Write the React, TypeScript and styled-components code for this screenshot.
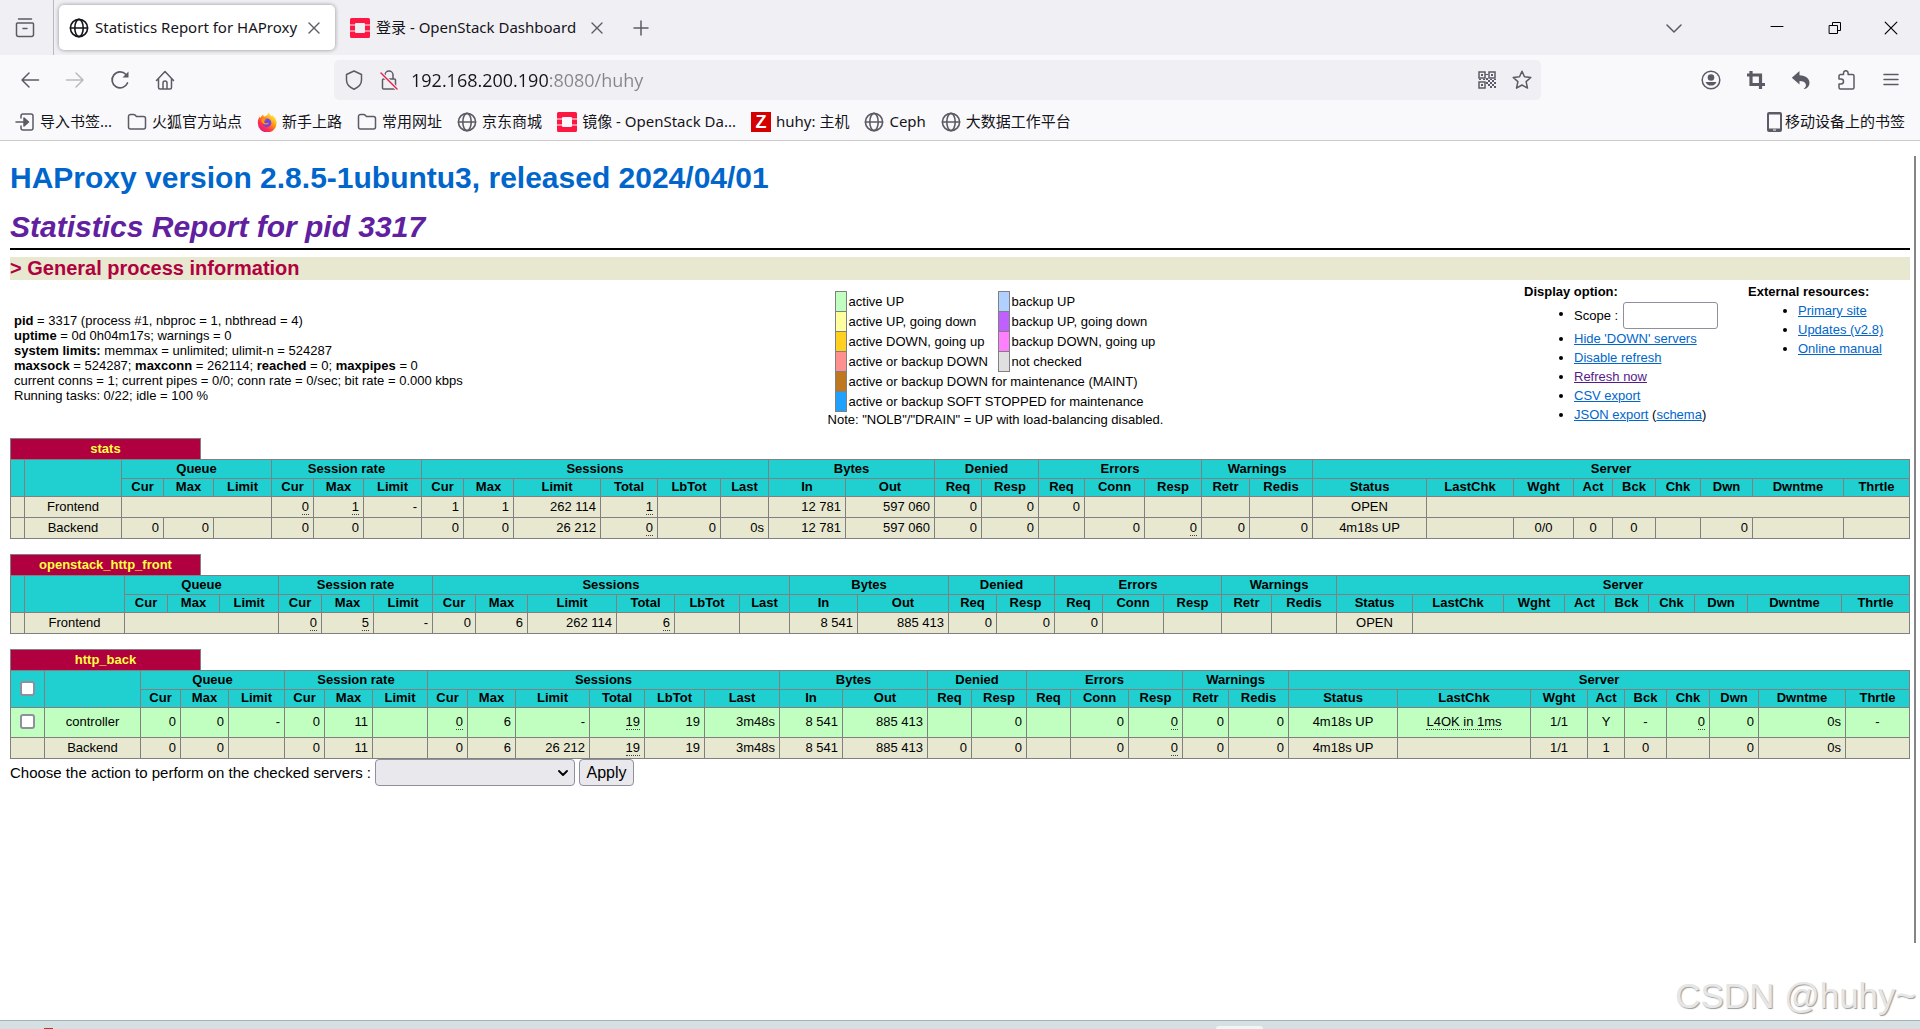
import React from "react";
import styled, { createGlobalStyle } from "styled-components";

const UI_FONT = `"Noto Sans", "Noto Sans CJK SC", sans-serif`;
const PAGE_FONT = `"Liberation Sans", Arial, Helvetica, sans-serif`;
const INK = "#15141a";
const ICON = "#5b5b66";
const LINE = "#808080";

const GlobalStyle = createGlobalStyle`
  *, *::before, *::after { box-sizing: border-box; }
  body { margin: 0; background: #fff; }
  button, input, select { font: inherit; }
`;

const Window = styled.div`
  min-height: 100vh;
  display: flex;
  flex-direction: column;
  font-family: ${UI_FONT};
  color: ${INK};
`;

/* ---------- browser frame ---------- */

const TabStrip = styled.header`
  display: flex;
  align-items: center;
  height: 55px;
  background: #f0f0f4;
`;

const IconButton = styled.button<{ $w?: number }>`
  display: flex;
  align-items: center;
  justify-content: center;
  flex: none;
  width: ${(p) => p.$w ?? 45}px;
  height: 40px;
  padding: 0;
  border: 0;
  background: transparent;
  color: ${ICON};
`;

const RecentPane = styled.div`
  display: flex;
  align-items: center;
  justify-content: center;
  width: 54px;
  height: 55px;
  padding-right: 4px;
  border-right: 1px solid #b9b9c0;
`;

const Tab = styled.div<{ $active?: boolean }>`
  display: flex;
  align-items: center;
  gap: 6px;
  height: 45px;
  margin-left: 5px;
  padding: 0 15px 0 10px;
  border-radius: 5px;
  font-size: 15px;
  line-height: 20px;
  white-space: nowrap;
  background: ${(p) => (p.$active ? "#fff" : "transparent")};
  box-shadow: ${(p) => (p.$active ? "0 0 4px rgba(0, 0, 0, 0.4)" : "none")};
`;

const TabTitle = styled.span<{ $w: number }>`
  width: ${(p) => p.$w}px;
  padding-bottom: 2px;
`;

const Spacer = styled.div`
  flex: 1;
`;

const WindowButtons = styled.div`
  display: flex;
  padding-right: 1px;
`;

const WindowButton = styled(IconButton)`
  color: #000;
`;

const NavBar = styled.nav`
  display: flex;
  align-items: center;
  height: 50px;
  padding: 0 7px;
  background: #f9f9fb;
`;

const NavGroup = styled.div<{ $w?: number }>`
  display: flex;
  width: ${(p) => (p.$w ? p.$w + "px" : "auto")};
`;

const AddressBar = styled.div`
  display: flex;
  align-items: center;
  flex: 1;
  height: 40px;
  margin-right: 147px;
  padding: 0 2px;
  border-radius: 5px;
  background: #f0f0f4;
`;

const AddressInput = styled.input`
  flex: 1;
  height: 30px;
  padding: 0;
  margin-left: 5px;
  border: 0;
  outline: 0;
  font-family: "Open Sans", "Noto Sans CJK SC", sans-serif;
  font-size: 18px;
  color: transparent;
  background: linear-gradient(90deg, ${INK} 138px, #85858c 138px);
  background-clip: text;
`;

const BookmarkBar = styled.div`
  display: flex;
  align-items: center;
  gap: 15px;
  height: 36px;
  padding: 0 15px 1px;
  background: #f9f9fb;
  border-bottom: 1px solid #cccccc;
`;

const Bookmark = styled.a<{ $tight?: boolean }>`
  display: flex;
  align-items: center;
  gap: ${(p) => (p.$tight ? 3 : 5)}px;
  color: ${INK};
  font-size: 15px;
  line-height: 20px;
  text-decoration: none;
  white-space: nowrap;
  svg {
    color: ${ICON};
  }
`;

const BookmarkName = styled.span`
  padding-bottom: 2px;
`;

const ZBadge = styled.span`
  display: flex;
  align-items: center;
  justify-content: center;
  width: 20px;
  height: 20px;
  background: #d40000;
  color: #fff;
  font: bold 18px/20px ${PAGE_FONT};
`;

/* ---------- report page ---------- */

const Viewport = styled.div`
  position: relative;
  flex: 1;
  background: #fff;
`;

const ScrollThumb = styled.div`
  position: absolute;
  top: 15px;
  right: 4px;
  width: 2px;
  height: calc(100% - 92px);
  background: #858585;
`;

const Report = styled.main`
  padding: 20px 10px 0;
  font-family: ${PAGE_FONT};
  font-size: 13px;
  line-height: 15px;
  color: #000;
`;

const Title = styled.h1`
  margin: 0;
  font-size: 30px;
  line-height: 34px;
  color: #0066cc;
`;

const Subtitle = styled.h2`
  margin: 15px 0 0;
  font-size: 30px;
  line-height: 34px;
  font-style: italic;
  color: #6020a0;
`;

const Rule = styled.hr`
  height: 2px;
  margin: 4px 0 7px;
  border: 0;
  background: #000;
`;

const SectionTitle = styled.h3`
  margin: 0;
  font-size: 20px;
  line-height: 23px;
  color: #b00040;
  background: #e8e8d0;
`;

const Overview = styled.section`
  display: grid;
  grid-template-columns: 54fr 46fr 224px 162px;
  align-items: center;
  min-height: 158px;
  padding: 2px 0;
`;

const ProcessInfo = styled.p`
  margin: 0;
  padding: 0 0 2px 4px;
`;

const LegendTable = styled.table`
  margin-left: 7px;
  border-collapse: collapse;
  tr {
    height: 20px;
  }
`;

const Swatch = styled.td<{ $color: string }>`
  width: 11px;
  min-width: 11px;
  padding: 0;
  border: 1px solid ${LINE};
  background: ${(p) => p.$color};
`;

const Label = styled.td<{ $w?: number }>`
  width: ${(p) => (p.$w ? p.$w + "px" : "auto")};
  padding: 0 0 0 2px;
  white-space: nowrap;
`;

const Options = styled.div`
  align-self: start;
  line-height: 19px;
`;

const OptionList = styled.ul`
  margin: 0;
  padding-left: 50px;
`;

const ScopeLabel = styled.label`
  display: inline-flex;
  align-items: center;
  gap: 5px;
  height: 28px;
  vertical-align: middle;
`;

const ScopeInput = styled.input`
  width: 95px;
  height: 27px;
  border: 1px solid #8f8f9d;
  border-radius: 3px;
  background: #fff;
`;

const Link = styled.a<{ $visited?: boolean }>`
  color: ${(p) => (p.$visited ? "#551a8b" : "#0066cc")};
`;

const ProxyName = styled.h4`
  width: calc(10% + 1px);
  height: 21px;
  margin: 0;
  border: 1px solid ${LINE};
  border-bottom: 0;
  background: #b00040;
  color: #ffff40;
  font-size: 13px;
  line-height: 19px;
  text-align: center;
`;

const StatTable = styled.table`
  width: 100%;
  margin-bottom: 15px;
  border-collapse: collapse;
  table-layout: fixed;
  background: #e8e8d0;
`;

const Col = styled.col<{ $share: number }>`
  width: ${(p) => p.$share}%;
`;

const Head = styled.th<{ $h: number }>`
  height: ${(p) => p.$h}px;
  padding: 0 0 2px;
  border: 1px solid ${LINE};
  background: #20d0d0;
`;

const Row = styled.tr<{ $up?: boolean }>`
  height: ${(p) => (p.$up ? 30 : 21)}px;
  background: ${(p) => (p.$up ? "#c0ffc0" : "#e8e8d0")};
`;

const Cell = styled.td<{ $center?: boolean }>`
  padding: 0 4px 2px;
  border: 1px solid ${LINE};
  text-align: ${(p) => (p.$center ? "center" : "right")};
  white-space: nowrap;
`;

const Hint = styled.span`
  border-bottom: 1px dotted #404040;
`;

const Check = styled.input`
  appearance: none;
  display: block;
  width: 15px;
  height: 15px;
  margin: 0 auto;
  border: 2px solid #8f8f9d;
  border-radius: 3px;
  background: #fff;
`;

const ActionForm = styled.form`
  display: flex;
  align-items: center;
  gap: 4px;
  height: 27px;
  margin-top: -15px;
  font-size: 15px;
`;

const SelectBox = styled.div`
  position: relative;
  svg {
    position: absolute;
    right: 7px;
    top: 9px;
    pointer-events: none;
  }
`;

const ActionSelect = styled.select`
  appearance: none;
  display: block;
  width: 200px;
  height: 27px;
  border: 1px solid #8f8f9d;
  border-radius: 4px;
  background: #e9e9ed;
`;

const ApplyButton = styled.button`
  height: 27px;
  width: 55px;
  padding: 0;
  border: 1px solid #8f8f9d;
  border-radius: 4px;
  background: #e9e9ed;
  color: #000;
  font-size: 16px;
`;

const Watermark = styled.div`
  position: absolute;
  right: 4px;
  bottom: 4px;
  font: 35px/40px ${PAGE_FONT};
  color: #e6e6e6;
  text-shadow: 1px 1px 1px #9a9a9a;
`;

const Taskbar = styled.footer`
  display: flex;
  align-items: flex-end;
  height: 9px;
  padding-left: 44px;
  border-top: 1px solid #a9b3b6;
  background: #d6dfe2;
`;

const TaskDot = styled.span`
  width: 9px;
  height: 1px;
  background: #c4302b;
`;

const TaskItem = styled.span`
  width: 47px;
  height: 3px;
  margin-left: 62%;
  border-radius: 3px 3px 0 0;
  background: #f0f5f5;
`;

/* ---------- icons ---------- */

type IconProps = { size?: number; box?: number; children: React.ReactNode; w?: number };
const Icon = ({ size = 20, box = 20, w = 1.5, children }: IconProps) => (
  <svg width={size} height={size} viewBox={`0 0 ${box} ${box}`} fill="none" stroke="currentColor" strokeWidth={w} strokeLinecap="round" strokeLinejoin="round" aria-hidden="true">
    {children}
  </svg>
);

const Globe = () => (
  <Icon w={1.6}>
    <circle cx="10" cy="10" r="8.6" />
    <ellipse cx="10" cy="10" rx="4.2" ry="8.6" />
    <path d="M1.5 10h17" />
  </Icon>
);

const Folder = () => (
  <Icon>
    <path d="M1.5 4.5A2 2 0 0 1 3.500 2.500h3.200c.6 0 1 .2 1.400.6l1.300 1.400h7.100a2 2 0 0 1 2 2v8.500a2 2 0 0 1-2 2h-13a2 2 0 0 1-2-2z" />
  </Icon>
);

const OpenStack = () => (
  <svg width="20" height="20" viewBox="0 0 20 20" fill="#ff1744" aria-hidden="true">
    <path d="M0 1.500A1.500 1.500 0 0 1 1.500 0h17A1.500 1.500 0 0 1 20 1.500V6.500h-5V6a1 1 0 0 0-1-1H6a1 1 0 0 0-1 1v.5H0z" />
    <path d="M0 7.500h5v5H0zM15 7.500h5v5h-5z" />
    <path d="M0 18.500A1.500 1.500 0 0 0 1.500 20h17a1.500 1.500 0 0 0 1.500-1.500V13.500h-5v.5a1 1 0 0 1-1 1H6a1 1 0 0 1-1-1v-.5H0z" />
  </svg>
);

const Firefox = () => (
  <svg width="20" height="20" viewBox="0 0 20 20" aria-hidden="true">
    <defs>
      <linearGradient id="fx" x1="0.85" y1="0.1" x2="0.2" y2="0.95">
        <stop offset="0" stopColor="#fff44f" />
        <stop offset="0.4" stopColor="#ff980e" />
        <stop offset="0.7" stopColor="#ff3647" />
        <stop offset="1" stopColor="#e31587" />
      </linearGradient>
    </defs>
    <path fill="url(#fx)" d="M11.800.2c.3 2 2 3 3.200 4.300.2-.6.100-1 0-1.500C18 5 19.600 7.800 19.600 11A9.400 9.400 0 0 1 .8 11c0-2.800.8-5 2-6.500.1.700.3 1 .6 1.400C4 4.300 5 3.300 6.200 2.500c0 .9.300 1.500.9 2C9 4.300 11 2.800 11.800.2z" />
    <circle cx="10" cy="10.800" r="4.300" fill="#7542e5" />
    <path fill="#ff980e" d="M4.200 7.500c1.800-1 4-.7 5.300.6-1.600.1-2.300.9-2.300 1.700 0 1 1 1.700 2.300 1.500 1-.1 1.700-.6 2.500-.5-.6 1.400-2 2-3.600 1.700-2.600-.4-4.200-2.500-4.200-5z" />
  </svg>
);

const Close = ({ size = 12, w = 1.4 }: { size?: number; w?: number }) => (
  <Icon size={size} box={12} w={w}>
    <path d="M1 1l10 10M11 1L1 11" />
  </Icon>
);

const qrDots = ["M13 12h2v2h-2z", "M15 10h2v2h-2z", "M11 10h2v2h-2z", "M11 14h2v2h-2z", "M15 14h2v2h-2z", "M17 12h2v2h-2z", "M13 16h2v2h-2z", "M17 16h2v2h-2z", "M9 8h2v2H9z", "M2 9h2v1H2z", "M6 9h2v1H6z", "M13 9h2v1h-2z", "M17 9h2v1h-2z", "M8 4h3v1H8z", "M9 12h2v2H9z"];

/* ---------- data ---------- */

type Value = string | { text?: string; hint?: boolean; span?: number };
type ProxyRow = { name: string; up?: boolean; values: Value[] };
type Proxy = { name: string; selectable?: boolean; widths: number[]; rows: ProxyRow[] };

const h = (text: string): Value => ({ text, hint: true });
const gap = (span: number): Value => ({ span });

const groups: [string, string[]][] = [
  ["Queue", ["Cur", "Max", "Limit"]],
  ["Session rate", ["Cur", "Max", "Limit"]],
  ["Sessions", ["Cur", "Max", "Limit", "Total", "LbTot", "Last"]],
  ["Bytes", ["In", "Out"]],
  ["Denied", ["Req", "Resp"]],
  ["Errors", ["Req", "Conn", "Resp"]],
  ["Warnings", ["Retr", "Redis"]],
  ["Server", ["Status", "LastChk", "Wght", "Act", "Bck", "Chk", "Dwn", "Dwntme", "Thrtle"]],
];
const centered = new Set([21, 22, 23, 24, 25, 29]);

const proxies: Proxy[] = [
  {
    name: "stats",
    widths: [14, 97, 42, 50, 58, 42, 50, 58, 42, 50, 87, 57, 63, 48, 77, 89, 47, 57, 46, 60, 57, 48, 63, 114, 87, 60, 39, 43, 45, 52, 91, 66],
    rows: [
      { name: "Frontend", values: [gap(3), h("0"), h("1"), "-", "1", "1", "262 114", h("1"), "", "", "12 781", "597 060", "0", "0", "0", "", "", "", "", "OPEN", gap(8)] },
      { name: "Backend", values: ["0", "0", "", "0", "0", "", "0", "0", "26 212", h("0"), "0", "0s", "12 781", "597 060", "0", "0", "", "0", h("0"), "0", "0", "4m18s UP", "", "0/0", "0", "0", "", "0", "", ""] },
    ],
  },
  {
    name: "openstack_http_front",
    widths: [14, 100, 43, 52, 59, 43, 52, 59, 43, 52, 89, 58, 65, 50, 68, 91, 48, 58, 48, 61, 58, 50, 65, 76, 91, 61, 40, 44, 46, 53, 94, 68],
    rows: [
      { name: "Frontend", values: [gap(3), h("0"), h("5"), "-", "0", "6", "262 114", h("6"), "", "", "8 541", "885 413", "0", "0", "0", "", "", "", "", "OPEN", gap(8)] },
    ],
  },
  {
    name: "http_back",
    selectable: true,
    widths: [34, 96, 40, 48, 56, 40, 48, 55, 40, 48, 74, 55, 60, 75, 63, 85, 44, 55, 44, 58, 54, 46, 60, 109, 133, 57, 37, 42, 43, 49, 87, 64],
    rows: [
      { name: "controller", up: true, values: ["0", "0", "-", "0", "11", "", h("0"), "6", "-", h("19"), "19", "3m48s", "8 541", "885 413", "", "0", "", "0", h("0"), "0", "0", "4m18s UP", h("L4OK in 1ms"), "1/1", "Y", "-", h("0"), "0", "0s", "-"] },
      { name: "Backend", values: ["0", "0", "", "0", "11", "", "0", "6", "26 212", h("19"), "19", "3m48s", "8 541", "885 413", "0", "0", "", "0", h("0"), "0", "0", "4m18s UP", "", "1/1", "1", "0", "", "0", "0s", ""] },
    ],
  },
];

const legend: [string, string, string?, string?][] = [
  ["#c0ffc0", "active UP", "#b0d0ff", "backup UP"],
  ["#ffffa0", "active UP, going down", "#c060ff", "backup UP, going down"],
  ["#ffd020", "active DOWN, going up", "#ff80ff", "backup DOWN, going up"],
  ["#ff9090", "active or backup DOWN", "#e0e0e0", "not checked"],
  ["#c07820", "active or backup DOWN for maintenance (MAINT)"],
  ["#20a0ff", "active or backup SOFT STOPPED for maintenance"],
];

/* ---------- parts ---------- */

const RowCells = ({ values }: { values: Value[] }) => {
  let column = 0;
  return (
    <>
      {values.map((value, i) => {
        const v = typeof value === "string" ? { text: value } : value;
        const at = column;
        column += v.span ?? 1;
        return (
          <Cell key={i} colSpan={v.span} $center={centered.has(at) || v.text === "OPEN"}>
            {v.hint ? <Hint>{v.text}</Hint> : v.text}
          </Cell>
        );
      })}
    </>
  );
};

const ProxyTable = ({ proxy }: { proxy: Proxy }) => {
  const total = proxy.widths.reduce((a, b) => a + b, 0);
  return (
    <>
      <ProxyName>{proxy.name}</ProxyName>
      <StatTable aria-label={proxy.name}>
        <colgroup>
          {proxy.widths.map((w, i) => (
            <Col key={i} $share={(w / total) * 100} />
          ))}
        </colgroup>
        <thead>
          <tr>
            <Head $h={37} rowSpan={2}>
              {proxy.selectable && <Check type="checkbox" aria-label="Select all servers" />}
            </Head>
            <Head $h={37} rowSpan={2} />
            {groups.map(([name, cols]) => (
              <Head key={name} $h={19} colSpan={cols.length}>{name}</Head>
            ))}
          </tr>
          <tr>
            {groups.flatMap(([name, cols]) => cols.map((c) => <Head key={name + c} $h={18}>{c}</Head>))}
          </tr>
        </thead>
        <tbody>
          {proxy.rows.map((row) => (
            <Row key={row.name} $up={row.up}>
              <Cell $center>{row.up && <Check type="checkbox" aria-label={row.name} />}</Cell>
              <Cell $center>{row.name}</Cell>
              <RowCells values={row.values} />
            </Row>
          ))}
        </tbody>
      </StatTable>
    </>
  );
};

const BrowserFrame = () => (
  <>
    <TabStrip>
      <RecentPane>
        <IconButton aria-label="Recent browsing">
          <Icon><path d="M3.500 1h13M2.500 5h15a1 1 0 0 1 1 1v10.500a2 2 0 0 1-2 2h-13a2 2 0 0 1-2-2V6a1 1 0 0 1 1-1zM8 10.500h4" /></Icon>
        </IconButton>
      </RecentPane>
      <Tab $active>
        <Globe />
        <TabTitle $w={207}>Statistics Report for HAProxy</TabTitle>
        <IconButton $w={12} aria-label="Close tab"><Close /></IconButton>
      </Tab>
      <Tab>
        <OpenStack />
        <TabTitle $w={209}>登录 - OpenStack Dashboard</TabTitle>
        <IconButton $w={12} aria-label="Close tab"><Close /></IconButton>
      </Tab>
      <IconButton aria-label="New tab"><Icon size={16} box={16}><path d="M8 1v14M1 8h14" /></Icon></IconButton>
      <Spacer />
      <WindowButtons>
        <IconButton $w={148} aria-label="List all tabs"><Icon size={16} box={16}><path d="M1 5l7 7 7-7" /></Icon></IconButton>
        <WindowButton $w={58} aria-label="Minimize"><Icon size={14} box={14} w={1}><path d="M1 5.500h12" /></Icon></WindowButton>
        <WindowButton $w={57} aria-label="Restore"><Icon size={14} box={14} w={1}><path d="M1.500 4.500h8v8h-8zM4.500 4.500v-3h8v8h-3" /></Icon></WindowButton>
        <WindowButton $w={56} aria-label="Close window"><Close size={14} w={1} /></WindowButton>
      </WindowButtons>
    </TabStrip>
    <NavBar>
      <NavGroup $w={327}>
        <IconButton aria-label="Back"><Icon><path d="M18.500 10H2M9 3l-7 7 7 7" /></Icon></IconButton>
        <IconButton aria-label="Forward" disabled><Icon><path opacity=".4" d="M1.500 10H18M11 3l7 7-7 7" /></Icon></IconButton>
        <IconButton aria-label="Reload"><Icon w={1.700}><path d="M17.500 13A8 8 0 1 1 16 4.500" /><path d="M18.500 1.500v6h-6z" fill="currentColor" stroke="none" /></Icon></IconButton>
        <IconButton aria-label="Home"><Icon><path d="M1.500 10.500L10 1.500l8.500 9M3.500 8.500v9a1.500 1.500 0 0 0 1.500 1.500h10a1.500 1.500 0 0 0 1.500-1.500v-9M8 18.500V13a2 2 0 0 1 4 0v5.500" /></Icon></IconButton>
      </NavGroup>
      <AddressBar>
        <IconButton $w={35} aria-label="Tracking protection"><Icon><path d="M10 1l7.500 3.500V10c0 4-3.500 7.500-7.500 9.200C6 17.500 2.500 14 2.500 10V4.500z" /></Icon></IconButton>
        <IconButton $w={35} aria-label="Connection not secure">
          <Icon><path d="M6 9V5a4 4 0 0 1 8 0v4M4.500 9h11a1 1 0 0 1 1 1v8a1 1 0 0 1-1 1h-11a1 1 0 0 1-1-1v-8a1 1 0 0 1 1-1z" /><path d="M2 3l16 16" stroke="#f0f0f4" strokeWidth="3.500" /><path d="M2 3l16 16" stroke="#e22850" /></Icon>
        </IconButton>
        <AddressInput aria-label="Address" defaultValue="192.168.200.190:8080/huhy" spellCheck={false} />
        <IconButton $w={35} aria-label="QR code">
          <Icon w={1.500}><path strokeLinejoin="miter" d="M2 2h6v6H2zM12 2h6v6h-6zM2 12h6v6H2z" /><g fill="currentColor" stroke="none"><path d="M4 4h2v2H4zM14 4h2v2h-2zM4 14h2v2H4z" />{qrDots.map((d) => <path key={d} d={d} />)}</g></Icon>
        </IconButton>
        <IconButton $w={35} aria-label="Bookmark this page"><Icon><path d="M10 1.200l2.500 5.600 6.300.7-4.700 4.100 1.400 6.500L10 15l-5.500 3.100 1.400-6.500L1.200 7.500l6.300-.7z" /></Icon></IconButton>
      </AddressBar>
      <NavGroup>
        <IconButton aria-label="Account"><Icon><circle cx="10" cy="10" r="8.800" /><g fill="currentColor" stroke="none"><circle cx="10" cy="7.500" r="3.300" /><path d="M4.500 12h11a6 6 0 0 1-11 0z" /></g></Icon></IconButton>
        <IconButton aria-label="Screenshot"><Icon w={3.200}><path strokeLinecap="butt" strokeLinejoin="miter" d="M5 1v13.500h14M1 5h13.500v14" /></Icon></IconButton>
        <IconButton aria-label="Undo close"><Icon><path fill="currentColor" stroke="none" d="M8.500 1v4.200C15 5.500 19 9 18.500 13.500c-.3 3-2.600 5-5.200 5.600-.6.100-.7-.4-.2-.7 1.500-1 2.200-2.500 1.700-4.200-.6-2.200-3-3.200-6.300-3.200v3.600L.8 7.800z" /></Icon></IconButton>
        <IconButton aria-label="Extensions"><Icon><path d="M3 9V6a1.500 1.500 0 0 1 1.500-1.500H7.500V3a2.300 2.300 0 0 1 4.600 0v1.500h4.400A1.500 1.500 0 0 1 18 6v11.500a1.500 1.500 0 0 1-1.500 1.500h-12A1.500 1.500 0 0 1 3 17.500V14h2a2.500 2.500 0 0 0 0-5z" /></Icon></IconButton>
        <IconButton aria-label="Menu"><Icon><path d="M3 4.500h14M3 9.500h14M3 14.500h14" /></Icon></IconButton>
      </NavGroup>
    </NavBar>
    <BookmarkBar>
      <Bookmark href="#"><Icon><path d="M6 6V4a2 2 0 0 1 2-2h8a2 2 0 0 1 2 2v12a2 2 0 0 1-2 2H8a2 2 0 0 1-2-2v-2M1 10h11" /><path d="M9 6l4.500 4L9 14z" fill="currentColor" /></Icon><BookmarkName>导入书签...</BookmarkName></Bookmark>
      <Bookmark href="#"><Folder /><BookmarkName>火狐官方站点</BookmarkName></Bookmark>
      <Bookmark href="#"><Firefox /><BookmarkName>新手上路</BookmarkName></Bookmark>
      <Bookmark href="#"><Folder /><BookmarkName>常用网址</BookmarkName></Bookmark>
      <Bookmark href="#"><Globe /><BookmarkName>京东商城</BookmarkName></Bookmark>
      <Bookmark href="#"><OpenStack /><BookmarkName>镜像 - OpenStack Da...</BookmarkName></Bookmark>
      <Bookmark href="#"><ZBadge>Z</ZBadge><BookmarkName>huhy: 主机</BookmarkName></Bookmark>
      <Bookmark href="#"><Globe /><BookmarkName>Ceph</BookmarkName></Bookmark>
      <Bookmark href="#"><Globe /><BookmarkName>大数据工作平台</BookmarkName></Bookmark>
      <Spacer />
      <Bookmark href="#" $tight>
        <svg width="15" height="20" viewBox="0 0 15 20" aria-hidden="true"><path fill="currentColor" fillRule="evenodd" d="M2 0h11a2 2 0 0 1 2 2v16a2 2 0 0 1-2 2H2a2 2 0 0 1-2-2V2a2 2 0 0 1 2-2zm0 2.500v14h11v-14zM6 17.500v1h3v-1z" /></svg>
        <BookmarkName>移动设备上的书签</BookmarkName>
      </Bookmark>
    </BookmarkBar>
  </>
);

export default function App() {
  return (
    <Window>
      <GlobalStyle />
      <BrowserFrame />
      <Viewport>
        <Report>
          <Title>HAProxy version 2.8.5-1ubuntu3, released 2024/04/01</Title>
          <Subtitle>Statistics Report for pid 3317</Subtitle>
          <Rule />
          <SectionTitle>&gt; General process information</SectionTitle>
          <Overview>
            <ProcessInfo>
              <b>pid</b> = 3317 (process #1, nbproc = 1, nbthread = 4)<br />
              <b>uptime</b> = 0d 0h04m17s; warnings = 0<br />
              <b>system limits:</b> memmax = unlimited; ulimit-n = 524287<br />
              <b>maxsock</b> = 524287; <b>maxconn</b> = 262114; <b>reached</b> = 0; <b>maxpipes</b> = 0<br />
              current conns = 1; current pipes = 0/0; conn rate = 0/sec; bit rate = 0.000 kbps<br />
              Running tasks: 0/22; idle = 100 %
            </ProcessInfo>
            <div>
              <LegendTable>
                <tbody>
                  {legend.map(([color, text, color2, text2]) => (
                    <tr key={text}>
                      <Swatch $color={color} />
                      {color2 ? (
                        <>
                          <Label $w={152}>{text}</Label>
                          <Swatch $color={color2} />
                          <Label>{text2}</Label>
                        </>
                      ) : (
                        <Label colSpan={3}>{text}</Label>
                      )}
                    </tr>
                  ))}
                </tbody>
              </LegendTable>
              Note: "NOLB"/"DRAIN" = UP with load-balancing disabled.
            </div>
            <Options>
              <b>Display option:</b>
              <OptionList>
                <li><ScopeLabel>Scope : <ScopeInput type="text" /></ScopeLabel></li>
                <li><Link href="#">Hide 'DOWN' servers</Link></li>
                <li><Link href="#">Disable refresh</Link></li>
                <li><Link href="#" $visited>Refresh now</Link></li>
                <li><Link href="#">CSV export</Link></li>
                <li><Link href="#">JSON export</Link> (<Link href="#">schema</Link>)</li>
              </OptionList>
            </Options>
            <Options>
              <b>External resources:</b>
              <OptionList>
                <li><Link href="#">Primary site</Link></li>
                <li><Link href="#">Updates (v2.8)</Link></li>
                <li><Link href="#">Online manual</Link></li>
              </OptionList>
            </Options>
          </Overview>
          {proxies.map((proxy) => (
            <ProxyTable key={proxy.name} proxy={proxy} />
          ))}
          <ActionForm onSubmit={(e) => e.preventDefault()}>
            <label htmlFor="action">Choose the action to perform on the checked servers :</label>
            <SelectBox>
              <ActionSelect id="action" defaultValue=""><option value="" /></ActionSelect>
              <Icon size={10} box={10} w={1.800}><path d="M1 3l4 4 4-4" /></Icon>
            </SelectBox>
            <ApplyButton type="submit">Apply</ApplyButton>
          </ActionForm>
        </Report>
        <ScrollThumb />
        <Watermark>CSDN @huhy~</Watermark>
      </Viewport>
      <Taskbar><TaskDot /><TaskItem /></Taskbar>
    </Window>
  );
}
